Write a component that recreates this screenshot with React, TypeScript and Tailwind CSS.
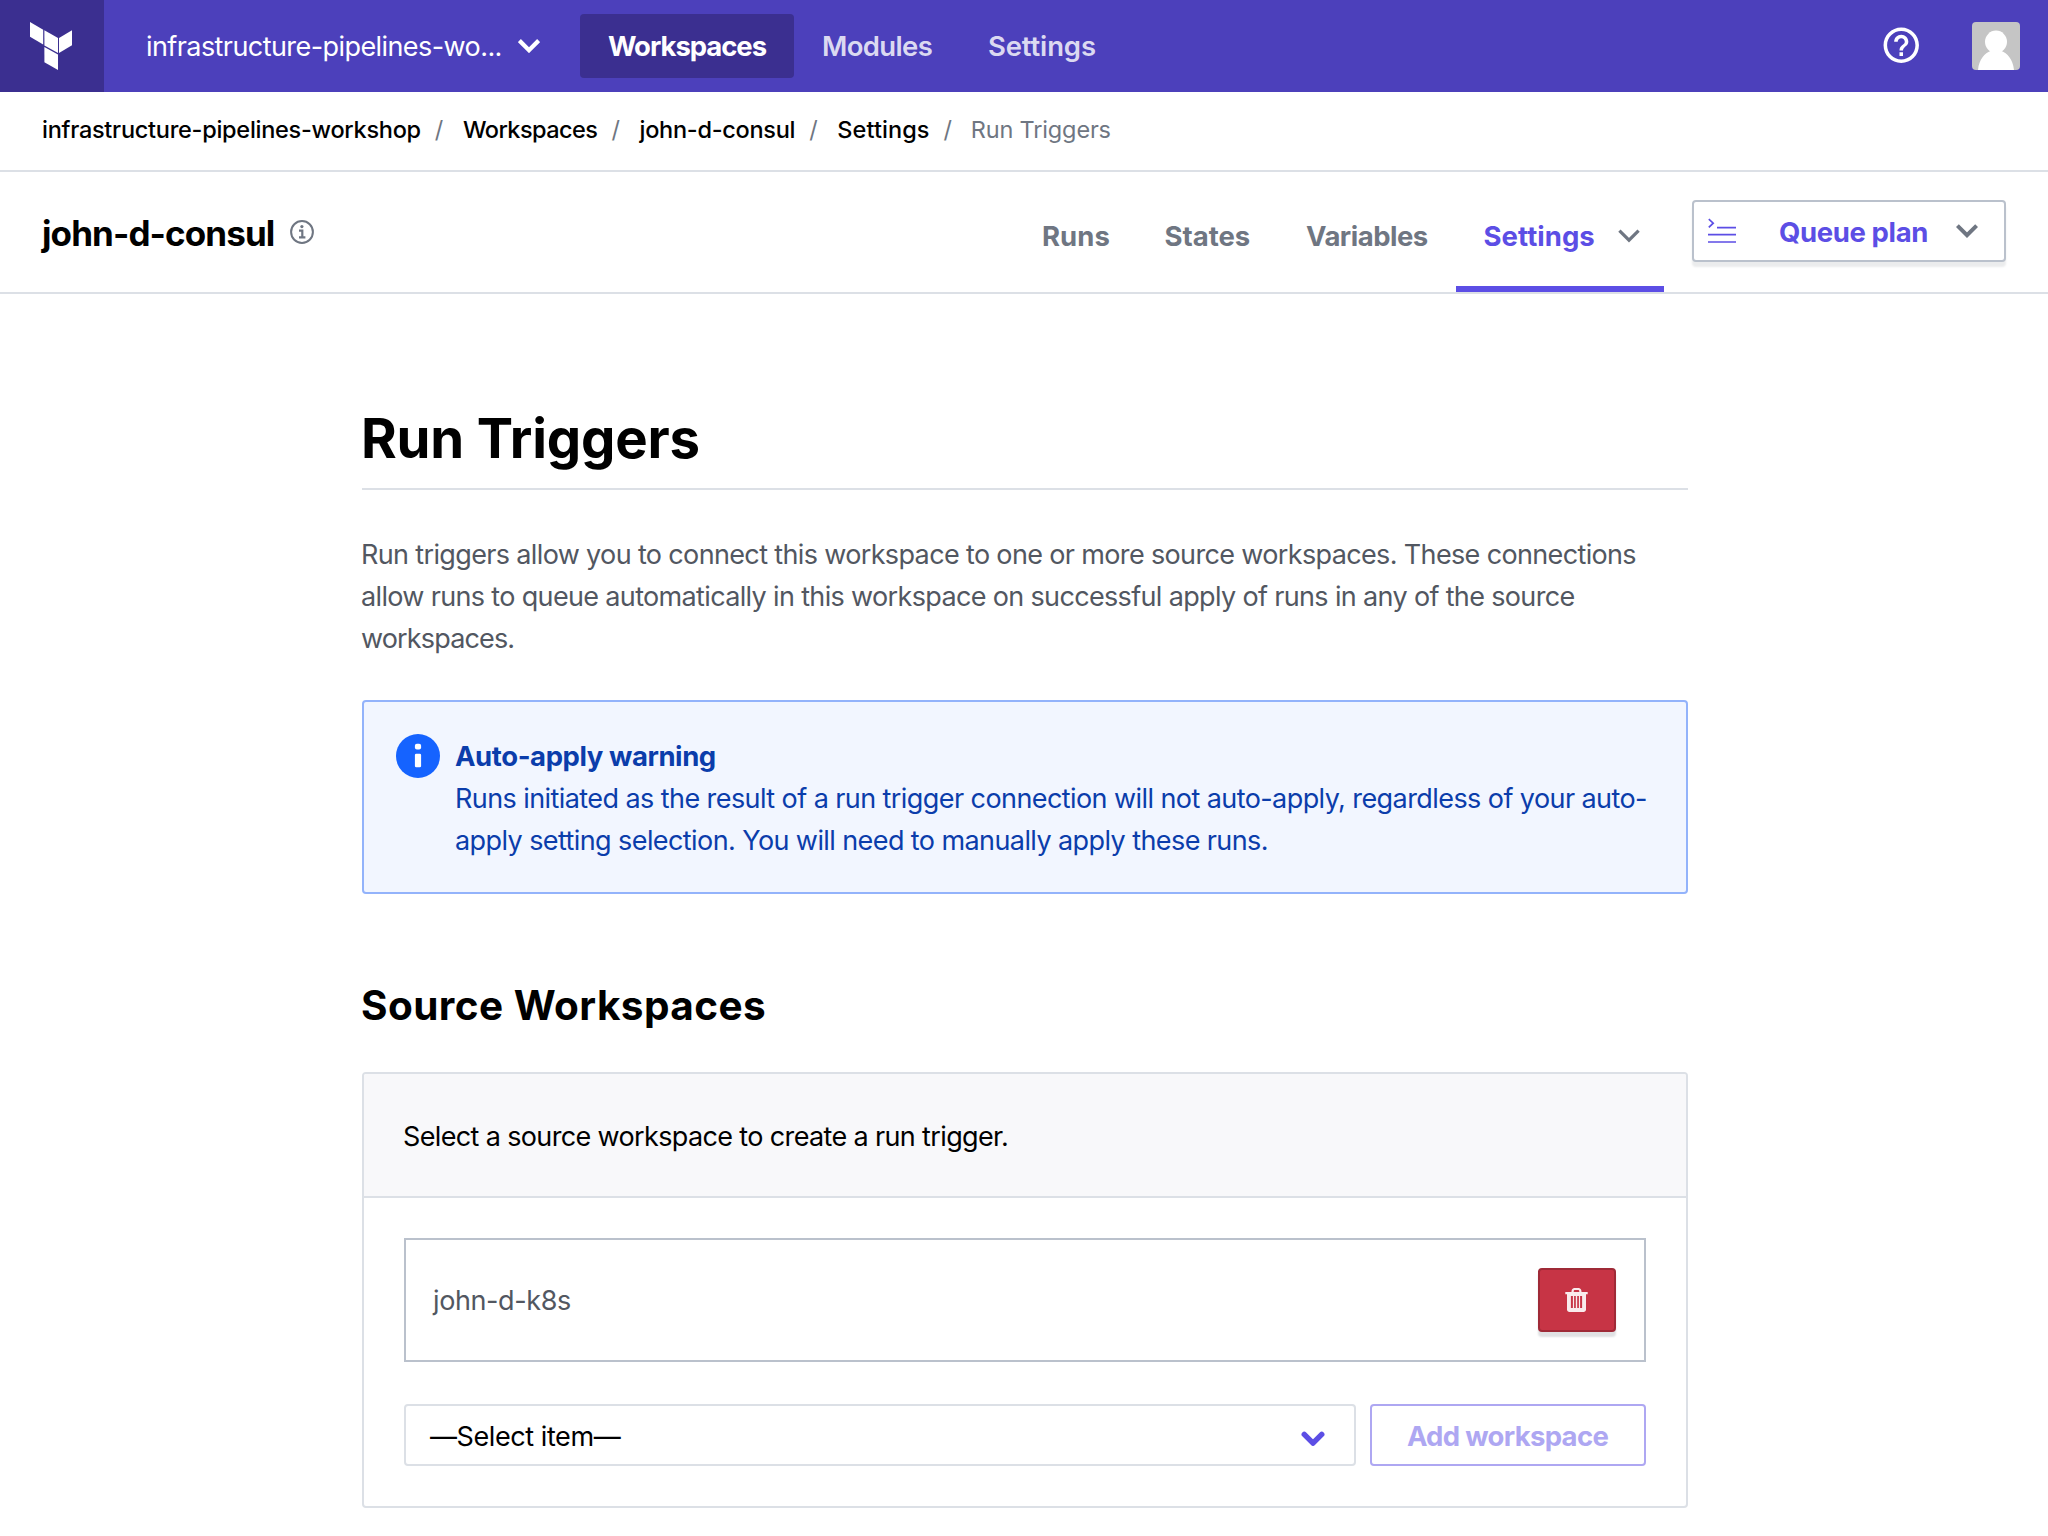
import type { ReactNode } from "react";
import { MdHelpOutline } from "react-icons/md";

function TerraformLogo() {
  return (
    <svg className="block h-12 w-[42px]" viewBox="0 0 42 48" fill="#fff">
      <path d="M0 0 13.2 7.7V22.5L0 14.8Z" />
      <path d="M14.4 8.3 28 16V31L14.4 23.4Z" />
      <path d="M29 16 42 8.3V23.2L29 31Z" />
      <path d="M14.4 25 28 32.6V48L14.4 40.2Z" />
    </svg>
  );
}

function Chevron({ className, stroke, width, round }: { className: string; stroke: string; width: number; round?: boolean }) {
  return (
    <svg className={className} viewBox="0 0 22 14" fill="none" stroke={stroke} strokeWidth={width} strokeLinecap={round ? "round" : "butt"} strokeLinejoin={round ? "round" : "miter"}>
      {round ? <path d="M3 3 11 11 19 3" /> : <path d="M1.4 1.6 11 11.2 20.6 1.6" />}
    </svg>
  );
}

function InfoOutline() {
  return (
    <svg className="block size-6" viewBox="0 0 24 24" fill="none" stroke="#6f7682">
      <circle cx="12" cy="12" r="10.9" strokeWidth="2" />
      <circle cx="11.9" cy="6.6" r="1.6" fill="#6f7682" stroke="none" />
      <path d="M9 10.6h3.3v6.6M9 17.3h6.4" strokeWidth="2.2" />
    </svg>
  );
}

function InfoSolid() {
  return (
    <svg className="block size-11 shrink-0" viewBox="0 0 44 44">
      <circle cx="22" cy="22" r="22" fill="#1563ff" />
      <rect x="18.9" y="9.8" width="6.2" height="5.6" rx="2" fill="#fff" />
      <rect x="18.9" y="19.7" width="6.2" height="13.6" rx="1.4" fill="#fff" />
    </svg>
  );
}

function QueueIcon() {
  return (
    <svg className="block h-[26px] w-7" viewBox="0 0 28 26" fill="none" stroke="#5c4ee5" strokeWidth="1.7">
      <path d="M.8 1.2 5.2 5.2.8 9.4" />
      <path d="M9 9.7H28M0 16.7H28M0 24H28" />
    </svg>
  );
}

function TrashIcon() {
  return (
    <svg className="mr-px block h-6 w-[23px]" viewBox="0 0 23 24" fill="#f9ebec">
      <path d="M6.5 4.6V3.4C6.5 1.4 7.8 0 9.6 0h3.8c1.8 0 3.1 1.4 3.1 3.4v1.2h-2.2V3.5c0-.9-.5-1.4-1.3-1.4H10c-.8 0-1.3.5-1.3 1.4v1.1Z" />
      <path d="M.3 4H22.7V6.2H.3Z" />
      <path
        fillRule="evenodd"
        d="M2 5.5H21V21.5C21 23 20 24 18.5 24H4.5C3 24 2 23 2 21.5ZM5.9 8V20H7.9V8ZM9.1 8V20H10.8V8ZM12.2 8V20H13.9V8ZM15.1 8V20H17.1V8Z"
      />
    </svg>
  );
}

function Avatar() {
  return (
    <svg className="block size-12 rounded-[4px] bg-[#c5c5c5]" viewBox="0 0 48 48" fill="#fff">
      <ellipse cx="24" cy="19.8" rx="11" ry="11.2" />
      <path d="M6 48C7 37 13 31 18.5 29V26h11v3C35 31 41 37 42 48Z" />
    </svg>
  );
}

function Slash() {
  return <span className="ml-[14px] mr-[19.7px] font-normal text-[#6f7682]">/</span>;
}

function Tab({ children, className }: { children: ReactNode; className: string }) {
  return <a className={`flex items-center border-b-[6px] border-transparent pt-[16px] ${className}`}>{children}</a>;
}

export default function App() {
  return (
    <div className="h-[1536px] w-[2048px] overflow-hidden bg-white font-['Inter','Liberation_Sans',sans-serif] text-[27px] text-black">
      <header className="flex h-[92px] items-center bg-[#4c40bb] text-white">
        <div className="flex h-full w-[104px] items-center bg-[#3b2f90] pl-[30px]">
          <TerraformLogo />
        </div>
        <div className="flex w-[476px] items-center pl-[42px]">
          <span className="w-[372px] whitespace-nowrap pt-0.5 tracking-[-0.575px]">infrastructure-pipelines-wo...</span>
          <Chevron className="block h-[14px] w-[22px]" stroke="#fff" width={4.2} />
        </div>
        <nav className="flex items-center text-[27.5px] font-semibold text-[#dbd9f1]">
          <a className="flex h-16 w-[214px] items-center rounded-[4px] bg-[#3b2f90] pl-[28px] pt-0.5 font-bold tracking-[-1.05px] text-white">Workspaces</a>
          <a className="w-[166px] pl-[28px] pt-0.5 tracking-[-0.65px]">Modules</a>
          <a className="pl-[28px] pt-0.5 tracking-[-0.15px]">Settings</a>
        </nav>
        <div className="ml-auto flex items-center pr-7">
          <MdHelpOutline className="mr-[50px] block size-[42.5px] -translate-y-px" />
          <Avatar />
        </div>
      </header>

      <nav className="flex h-20 items-center whitespace-nowrap border-b-2 border-[#dce0e6] pb-0.5 pl-[42px] text-[23.5px] font-medium">
        <a className="tracking-[-0.267px]">infrastructure-pipelines-workshop</a>
        <Slash />
        <a className="tracking-[-0.56px]">Workspaces</a>
        <Slash />
        <a className="tracking-[-0.278px]">john-d-consul</a>
        <Slash />
        <a className="tracking-[0.079px]">Settings</a>
        <Slash />
        <span className="-ml-px font-normal tracking-[-0.16px] text-[#6f7682]">Run Triggers</span>
      </nav>

      <div className="flex h-[122px] items-stretch border-b-2 border-[#dce0e6] pr-[42px]">
        <div className="flex items-center pl-[42px]">
          <h2 className="w-[248px] pt-[3px] text-[35px] font-bold tracking-[-0.9px]">john-d-consul</h2>
          <InfoOutline />
        </div>
        <nav className="ml-auto flex text-[27.5px] font-bold text-[#6f7682]">
          <Tab className="w-[122.500px] tracking-[0.05px]">Runs</Tab>
          <Tab className="w-[141.500px] tracking-[0px]">States</Tab>
          <Tab className="w-[150px] tracking-[-0.5px]">Variables</Tab>
          <Tab className="w-[208px] !border-[#5c4ee5] pl-[27.5px] tracking-[0.05px] text-[#5c4ee5]">
            <span className="w-[134.500px]">Settings</span>
            <Chevron className="block h-[14px] w-[22px] -translate-y-px" stroke="#6f7682" width={3.2} />
          </Tab>
        </nav>
        <button className="ml-7 mt-7 flex h-[62px] w-[314px] items-center rounded-[4px] border-2 border-[#bac1cc] bg-white pl-[14px] shadow-[0_5px_2px_rgba(37,41,55,0.09)]">
          <QueueIcon />
          <span className="ml-[43px] w-[177px] pt-[3px] text-left text-[27.5px] font-bold tracking-[-0.38px] text-[#5c4ee5]">Queue plan</span>
          <Chevron className="block h-[14px] w-[22px]" stroke="#6f7682" width={4} />
        </button>
      </div>

      <main className="ml-[362px] w-[1326px] pt-28">
        <h1 className="-ml-[1px] h-[82px] text-[54.5px] font-bold leading-[64px] tracking-[-0.2px]">Run Triggers</h1>
        <div className="h-0.5 bg-[#dce0e6]" />
        <p className="-ml-px mt-[44px] whitespace-nowrap leading-[42px] text-[#525761]">
          <span className="block tracking-[-0.645px]">
            Run triggers allow you to connect this workspace to one or more source workspaces. These connections
          </span>
          <span className="block tracking-[-0.655px]">
            allow runs to queue automatically in this workspace on successful apply of runs in any of the source
          </span>
          <span className="block tracking-[-0.85px]">workspaces.</span>
        </p>

        <section className="mt-[40px] flex h-[194px] gap-[15px] rounded-[4px] border-2 border-[#93b3fb] bg-[#f2f6ff] pl-8 pt-8 text-[#0b3dab]">
          <InfoSolid />
          <div className="whitespace-nowrap pt-px leading-[42px]">
            <h3 className="text-[27.5px] font-bold tracking-[-0.42px]">Auto-apply warning</h3>
            <p className="pt-px">
              <span className="block tracking-[-0.577px]">
                Runs initiated as the result of a run trigger connection will not auto-apply, regardless of your auto-
              </span>
              <span className="block tracking-[-0.587px]">
                apply setting selection. You will need to manually apply these runs.
              </span>
            </p>
          </div>
        </section>

        <h2 className="-ml-px mt-[88px] text-[40.5px] font-bold leading-[48px] tracking-[0.43px]">Source Workspaces</h2>

        <section className="mt-[42px] overflow-hidden rounded-[4px] border-2 border-[#dce0e6]">
          <div className="flex h-[124px] items-center border-b-2 border-[#dce0e6] bg-[#f8f8fa] pl-[39px] pt-1 tracking-[-0.64px]">
            Select a source workspace to create a run trigger.
          </div>
          <div className="p-10">
            <div className="flex h-[124px] items-center justify-between border-2 border-[#bac1cc] pl-[27px] pr-7">
              <span className="pt-0.5 tracking-[-0.4px] text-[#525761]">john-d-k8s</span>
              <button className="flex h-16 w-[78px] items-center justify-center rounded-[4px] border-2 border-[#9f2a37] bg-[#c73445] shadow-[0_5px_2px_rgba(37,41,55,0.14)]">
                <TrashIcon />
              </button>
            </div>
            <div className="mt-[42px] flex h-[62px] gap-[14px]">
              <div className="flex w-[952px] items-center justify-between rounded-[4px] border-2 border-[#dce0e6] pl-6 pr-[29px] tracking-[-0.42px]">
                <span className="pt-1">—Select item—</span>
                <Chevron className="mt-[7px] block h-[15.500px] w-[24px]" stroke="#5c4ee5" width={5} round />
              </div>
              <button className="w-[276px] rounded-[4px] border-2 border-[#aea7f2] pr-px pt-[3px] text-[27.5px] font-bold tracking-[-0.68px] text-[#aea7f2]">
                Add workspace
              </button>
            </div>
          </div>
        </section>
      </main>
    </div>
  );
}
